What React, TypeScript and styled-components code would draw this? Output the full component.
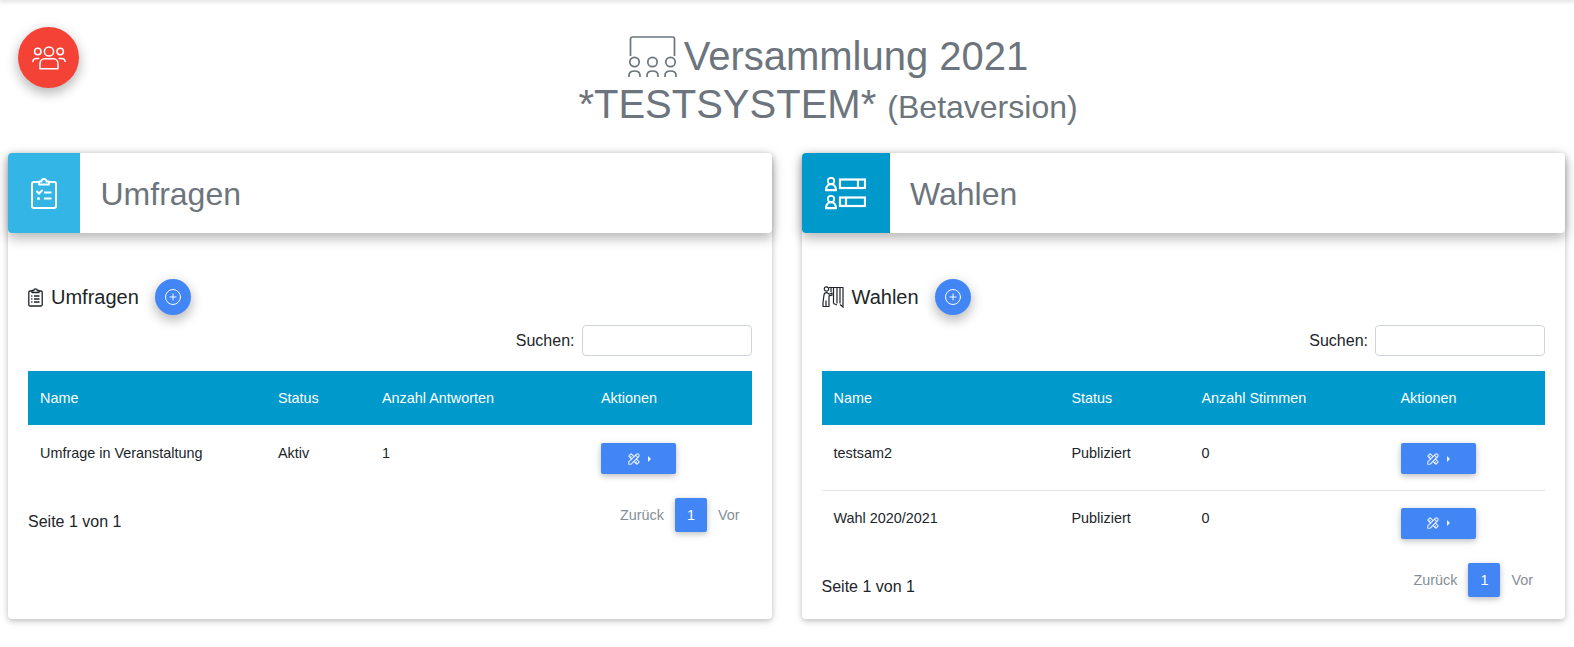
import React from 'react';
import styled, { createGlobalStyle } from 'styled-components';
import { CirclePlus } from 'lucide-react';
import { TbTools } from 'react-icons/tb';

const GlobalStyle = createGlobalStyle`
  html, body {
    margin: 0;
    padding: 0;
    background: #fff;
    color: #212529;
    font-family: "Liberation Sans", Arial, sans-serif;
    font-size: 16px;
  }
`;

// Schatten der abgeschnittenen Navigationsleiste
const TopShadow = styled.div`
  height: 0;
  box-shadow: 0 0 4px 1px rgba(0, 0, 0, 0.25);
`;

const Page = styled.div`
  position: relative;
  min-height: 647px;
  box-sizing: border-box;
  padding-bottom: 28px;
`;

const RoundButton = styled.button<{ $color: string; $size: number }>`
  width: ${p => p.$size}px;
  height: ${p => p.$size}px;
  border: 0;
  border-radius: 50%;
  padding: 0;
  background: ${p => p.$color};
  color: #fff;
  display: flex;
  align-items: center;
  justify-content: center;
  flex: none;
  box-shadow: 0 5px 11px 0 rgba(0, 0, 0, 0.18), 0 4px 15px 0 rgba(0, 0, 0, 0.15);
`;

const FloatingMenu = styled.div`
  position: absolute;
  left: 18px;
  top: 27px;
`;

const Hero = styled.header`
  padding: 32px 0 25px 82px;
  text-align: center;
  color: #6c757d;
`;

const HeroLine = styled.h1`
  margin: 0;
  font-size: 40px;
  line-height: 48px;
  font-weight: 400;
  white-space: nowrap;
`;

const HeroIcon = styled.svg`
  width: 49px;
  height: 42px;
  vertical-align: -8px;
  margin-right: 7px;
`;

const Small = styled.small`
  font-size: 32px;
  line-height: 1;
`;

const Columns = styled.main`
  display: grid;
  grid-template-columns: 1fr 1fr;
  gap: 30px;
  padding: 0 9px 0 8px;
`;

const Card = styled.section`
  height: 466px;
  border-radius: 4px;
  background: #fff;
  box-shadow: 0 2px 5px 0 rgba(0, 0, 0, 0.16), 0 2px 10px 0 rgba(0, 0, 0, 0.12);
`;

const CardHead = styled.div`
  height: 80px;
  display: flex;
  border-radius: 4px;
  background: #fff;
  box-shadow: 0 5px 11px 0 rgba(0, 0, 0, 0.18), 0 4px 15px 0 rgba(0, 0, 0, 0.15);
  overflow: hidden;
`;

const CardHeadIcon = styled.div<{ $color: string; $width: number }>`
  width: ${p => p.$width}px;
  flex: none;
  background: ${p => p.$color};
  color: #fff;
  display: flex;
  align-items: center;
  justify-content: center;
`;

const CardHeadTitle = styled.h2`
  margin: 0;
  padding-left: 20.5px;
  font-size: 32px;
  line-height: 82px;
  font-weight: 400;
  color: #6c757d;
`;

const CardBody = styled.div`
  padding: 46px 20px 0;
`;

const SectionRow = styled.div`
  display: flex;
  align-items: center;
  height: 36px;
`;

const SectionTitle = styled.h3`
  margin: 0 16px 0 0;
  display: flex;
  align-items: center;
  gap: 8px;
  font-size: 20px;
  line-height: 24px;
  font-weight: 400;
`;

const SearchRow = styled.label`
  margin: 10px 0 15px;
  display: flex;
  justify-content: flex-end;
  align-items: center;
  gap: 7px;
  font-size: 16px;
`;

const SearchInput = styled.input`
  box-sizing: border-box;
  width: 170px;
  height: 31px;
  border: 1px solid #ced4da;
  border-radius: 4px;
  background: #fff;
`;

const Table = styled.table`
  width: 100%;
  border-collapse: collapse;
  table-layout: fixed;
  font-size: 14.4px;
`;

const HeadCell = styled.th<{ $width?: number }>`
  width: ${p => (p.$width ? `${p.$width}px` : 'auto')};
  height: 54px;
  padding: 0 12px;
  background: #0099cc;
  color: #fff;
  font-weight: 400;
  text-align: left;
  box-sizing: border-box;
`;

const Cell = styled.td`
  height: 65px;
  padding: 18px 12px 0;
  vertical-align: top;
  line-height: 20px;
  box-sizing: border-box;
`;

const Row = styled.tr`
  & + & ${Cell} {
    padding-top: 17px;
    border-top: 1px solid #dee2e6;
  }
`;

const ActionButton = styled.button`
  width: 75px;
  height: 31px;
  border: 0;
  border-radius: 2px;
  padding: 0;
  background: #4285f4;
  color: rgba(255, 255, 255, 0.8);
  display: flex;
  align-items: center;
  justify-content: center;
  gap: 7px;
  box-shadow: 0 2px 5px 0 rgba(0, 0, 0, 0.16), 0 2px 10px 0 rgba(0, 0, 0, 0.12);
`;

const Caret = styled.span`
  width: 0;
  height: 0;
  border-left: 3px solid rgba(255, 255, 255, 0.9);
  border-top: 3px solid transparent;
  border-bottom: 3px solid transparent;
`;

const Footer = styled.div`
  display: flex;
  justify-content: space-between;
  align-items: flex-start;
  padding-top: 8px;
`;

const PageInfo = styled.div`
  padding-top: 12px;
  font-size: 16px;
  line-height: 24px;
`;

const Pager = styled.div`
  display: flex;
  align-items: center;
  font-size: 14.4px;
  color: #868e96;
`;

const PagerLink = styled.span`
  padding: 0 12px;

  &:first-child {
    padding-right: 11px;
  }

  &:last-child {
    padding-left: 11px;
  }
`;

const PagerCurrent = styled.span`
  width: 32px;
  height: 34px;
  border-radius: 2px;
  background: #4285f4;
  color: #fff;
  display: flex;
  align-items: center;
  justify-content: center;
  box-shadow: 0 2px 5px 0 rgba(0, 0, 0, 0.16), 0 2px 10px 0 rgba(0, 0, 0, 0.12);
`;

const GroupIcon = () => (
  <svg width="34" height="26" viewBox="0 0 34 26" fill="none" stroke="currentColor" strokeWidth="1.5">
    <circle cx="17" cy="6.5" r="4.6" />
    <circle cx="5.8" cy="6.5" r="3.2" />
    <circle cx="28.2" cy="6.5" r="3.2" />
    <path d="M8 23.8v-5c0-3 2-5 4.5-5h9c2.500 0 4.500 2 4.500 5v5z" strokeLinejoin="round" />
    <path d="M1 16.500c0-2 1.500-3 3.500-3h2.200M33 16.500c0-2-1.500-3-3.500-3h-2.200" strokeLinecap="round" />
  </svg>
);

const ClipboardLarge = () => (
  <svg width="26" height="32" viewBox="0 0 26 32" fill="none" stroke="currentColor" strokeWidth="2">
    <path d="M8 5H3A2 2 0 0 0 1 7v22a2 2 0 0 0 2 2h20a2 2 0 0 0 2-2V7a2 2 0 0 0-2-2h-5" />
    <path d="M8 7.500V4.500h2.500a2.500 2.500 0 0 1 5 0H18v3z" strokeLinejoin="round" strokeWidth="1.8" />
    <path d="M6 14.500l2 2 3-3" strokeLinecap="round" />
    <path d="M13 15.500h7.500M13 21.500h7.500" />
    <circle cx="7.500" cy="21.500" r="1.500" fill="currentColor" stroke="none" />
  </svg>
);

const BallotIcon = () => (
  <svg width="41" height="33" viewBox="0 0 41 33" fill="none" stroke="currentColor" strokeWidth="2.2">
    <circle cx="6" cy="4" r="3.200" strokeWidth="1.8" />
    <path d="M1 13.200c0-3.500 2-6 5-6s5 2.500 5 6z" strokeLinejoin="round" />
    <rect x="15" y="2.500" width="25" height="8.500" />
    <path d="M33 2.500V11" />
    <circle cx="6" cy="22" r="3.200" strokeWidth="1.8" />
    <path d="M1 31.200c0-3.500 2-6 5-6s5 2.500 5 6z" strokeLinejoin="round" />
    <rect x="15" y="20.500" width="25" height="8.500" />
    <path d="M21 20.500V29" />
  </svg>
);

const ClipboardSmall = () => (
  <svg width="15" height="19" viewBox="0 0 15 19" fill="none" stroke="currentColor" strokeWidth="1.3">
    <path d="M4 3H2A1.200 1.200 0 0 0 .8 4.200v12.600A1.200 1.200 0 0 0 2 18h11a1.200 1.200 0 0 0 1.200-1.200V4.200A1.200 1.200 0 0 0 13 3h-2" />
    <path d="M4 4.500v-2h1.800a1.700 1.700 0 0 1 3.400 0H11v2z" strokeLinejoin="round" />
    <path d="M6 8h5.500M6 11h5.500M6 14h5.500M3.200 8h1.200M3.200 11h1.200M3.200 14h1.200" />
  </svg>
);

const VoterIcon = () => (
  <svg width="22" height="22" viewBox="0 0 22 22" fill="none" stroke="currentColor" strokeWidth="1.2">
    <circle cx="4.500" cy="3" r="2.200" />
    <path d="M1 20.500v-4l1-7.500c.2-1.500 1-2.300 2.500-2.300 1.200 0 1.800.8 2.800 1.500L10 7v2.200l-3 .6v10.700H1zM4 20.500v-6" strokeLinejoin="round" />
    <path d="M7 1.500h14.500M9 1.500V6M11.500 1.500V17.500M15 1.500V17.500M18 1.500V17.500M21 1.500V21l-3-2.500M11.500 17.500l3.500 1.500" />
  </svg>
);

const PresentationIcon = () => (
  <HeroIcon viewBox="0 0 49 42" fill="none" stroke="currentColor" strokeWidth="1.7">
    <path d="M2.500 20V3a2 2 0 0 1 2-2h40a2 2 0 0 1 2 2v17" />
    <circle cx="6.500" cy="26" r="4.700" />
    <circle cx="24.500" cy="26" r="4.700" />
    <circle cx="42.500" cy="26" r="4.700" />
    <path d="M1 41v-1.500c0-3 2-4.500 5.500-4.500S12 36.500 12 39.500V41M19 41v-1.500c0-3 2-4.500 5.500-4.500S30 36.500 30 39.500V41M37 41v-1.500c0-3 2-4.500 5.500-4.500S48 36.500 48 39.500V41" />
  </HeroIcon>
);

interface TableRowData {
  name: string;
  status: string;
  count: number;
}

interface PanelProps {
  title: string;
  sectionIcon: React.ReactNode;
  headIcon: React.ReactNode;
  headColor: string;
  headWidth: number;
  countLabel: string;
  widths: [number, number, number];
  rows: TableRowData[];
}

const Panel: React.FC<PanelProps> = ({ title, sectionIcon, headIcon, headColor, headWidth, countLabel, widths, rows }) => (
  <Card>
    <CardHead>
      <CardHeadIcon $color={headColor} $width={headWidth}>{headIcon}</CardHeadIcon>
      <CardHeadTitle>{title}</CardHeadTitle>
    </CardHead>
    <CardBody>
      <SectionRow>
        <SectionTitle>{sectionIcon}{title}</SectionTitle>
        <RoundButton $color="#4285f4" $size={36}>
          <CirclePlus size={18} strokeWidth={1.3} />
        </RoundButton>
      </SectionRow>
      <SearchRow>
        Suchen:
        <SearchInput type="search" />
      </SearchRow>
      <Table>
        <thead>
          <tr>
            <HeadCell $width={widths[0]}>Name</HeadCell>
            <HeadCell $width={widths[1]}>Status</HeadCell>
            <HeadCell $width={widths[2]}>{countLabel}</HeadCell>
            <HeadCell>Aktionen</HeadCell>
          </tr>
        </thead>
        <tbody>
          {rows.map(row => (
            <Row key={row.name}>
              <Cell>{row.name}</Cell>
              <Cell>{row.status}</Cell>
              <Cell>{row.count}</Cell>
              <Cell>
                <ActionButton>
                  <TbTools size={14} />
                  <Caret />
                </ActionButton>
              </Cell>
            </Row>
          ))}
        </tbody>
      </Table>
      <Footer>
        <PageInfo>Seite 1 von 1</PageInfo>
        <Pager>
          <PagerLink>Zurück</PagerLink>
          <PagerCurrent>1</PagerCurrent>
          <PagerLink>Vor</PagerLink>
        </Pager>
      </Footer>
    </CardBody>
  </Card>
);

const App: React.FC = () => (
  <>
    <GlobalStyle />
    <Page>
      <TopShadow />
      <FloatingMenu>
        <RoundButton $color="#f44336" $size={61}>
          <GroupIcon />
        </RoundButton>
      </FloatingMenu>
      <Hero>
        <HeroLine><PresentationIcon />Versammlung 2021</HeroLine>
        <HeroLine>*TESTSYSTEM* <Small>(Betaversion)</Small></HeroLine>
      </Hero>
      <Columns>
        <Panel
          title="Umfragen"
          sectionIcon={<ClipboardSmall />}
          headIcon={<ClipboardLarge />}
          headColor="#33b5e5"
          headWidth={72}
          countLabel="Anzahl Antworten"
          widths={[238, 104, 219]}
          rows={[{ name: 'Umfrage in Veranstaltung', status: 'Aktiv', count: 1 }]}
        />
        <Panel
          title="Wahlen"
          sectionIcon={<VoterIcon />}
          headIcon={<BallotIcon />}
          headColor="#0099cc"
          headWidth={88}
          countLabel="Anzahl Stimmen"
          widths={[238, 130, 199]}
          rows={[
            { name: 'testsam2', status: 'Publiziert', count: 0 },
            { name: 'Wahl 2020/2021', status: 'Publiziert', count: 0 },
          ]}
        />
      </Columns>
    </Page>
  </>
);

export default App;
